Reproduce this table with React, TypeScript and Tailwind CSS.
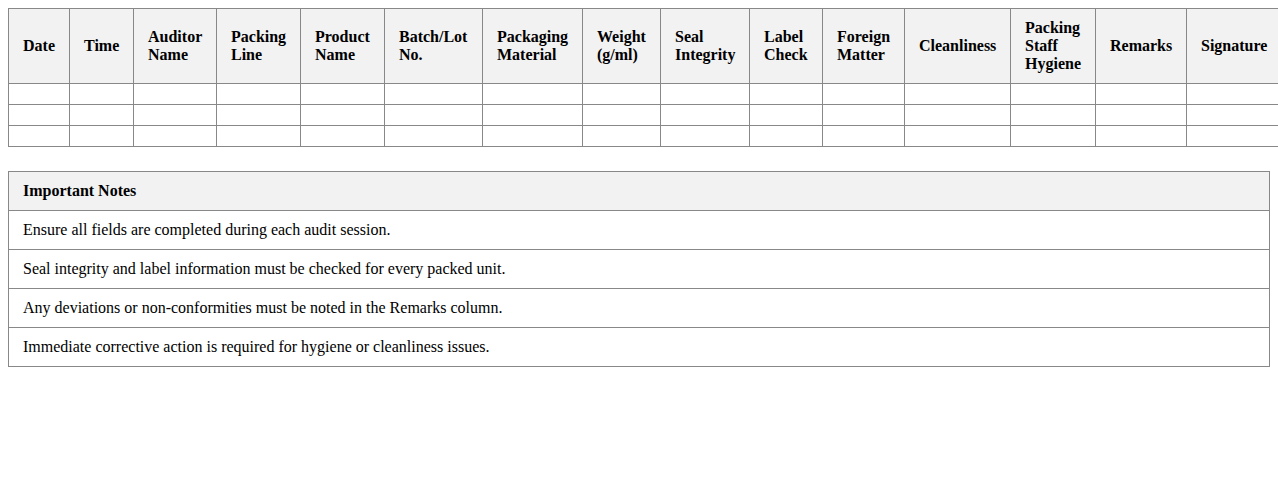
const columns = [
  { label: 'Date', w: 'w-[61px]' },
  { label: 'Time', w: 'w-[64px]' },
  { label: 'Auditor Name', w: 'w-[83px]' },
  { label: 'Packing Line', w: 'w-[84px]' },
  { label: 'Product Name', w: 'w-[84px]' },
  { label: 'Batch/Lot No.', w: 'w-[98px]' },
  { label: 'Packaging Material', w: 'w-[100px]' },
  { label: 'Weight (g/ml)', w: 'w-[78px]' },
  { label: 'Seal Integrity', w: 'w-[89px]' },
  { label: 'Label Check', w: 'w-[73px]' },
  { label: 'Foreign Matter', w: 'w-[82px]' },
  { label: 'Cleanliness', w: 'w-[106px]' },
  { label: 'Packing Staff Hygiene', w: 'w-[85px]' },
  { label: 'Remarks', w: 'w-[91px]' },
  { label: 'Signature', w: 'w-[98px]' },
]

const notes = [
  'Ensure all fields are completed during each audit session.',
  'Seal integrity and label information must be checked for every packed unit.',
  'Any deviations or non-conformities must be noted in the Remarks column.',
  'Immediate corrective action is required for hygiene or cleanliness issues.',
]

export default function App() {
  return (
    <div className="p-2 bg-white text-black text-[16px] leading-[18px] font-['Liberation_Serif',serif]">
      <table className="table-fixed border-collapse w-[1276px]">
        <thead>
          <tr>
            {columns.map((c) => (
              <th
                key={c.label}
                className={`${c.w} border border-[#888] bg-[#f2f2f2] px-[14px] py-[10px] text-left font-bold align-middle`}
              >
                {c.label}
              </th>
            ))}
          </tr>
        </thead>
        <tbody>
          {[0, 1, 2].map((r) => (
            <tr key={r}>
              {columns.map((c) => (
                <td key={c.label} className="border border-[#888] px-[14px] py-[10px] h-[21px]"></td>
              ))}
            </tr>
          ))}
        </tbody>
      </table>

      <table className="mt-6 w-full border-collapse">
        <thead>
          <tr>
            <th className="border border-[#888] bg-[#f2f2f2] px-[14px] py-[10px] text-left font-bold">
              Important Notes
            </th>
          </tr>
        </thead>
        <tbody>
          {notes.map((n) => (
            <tr key={n}>
              <td className="border border-[#888] px-[14px] py-[10px]">{n}</td>
            </tr>
          ))}
        </tbody>
      </table>
    </div>
  )
}
